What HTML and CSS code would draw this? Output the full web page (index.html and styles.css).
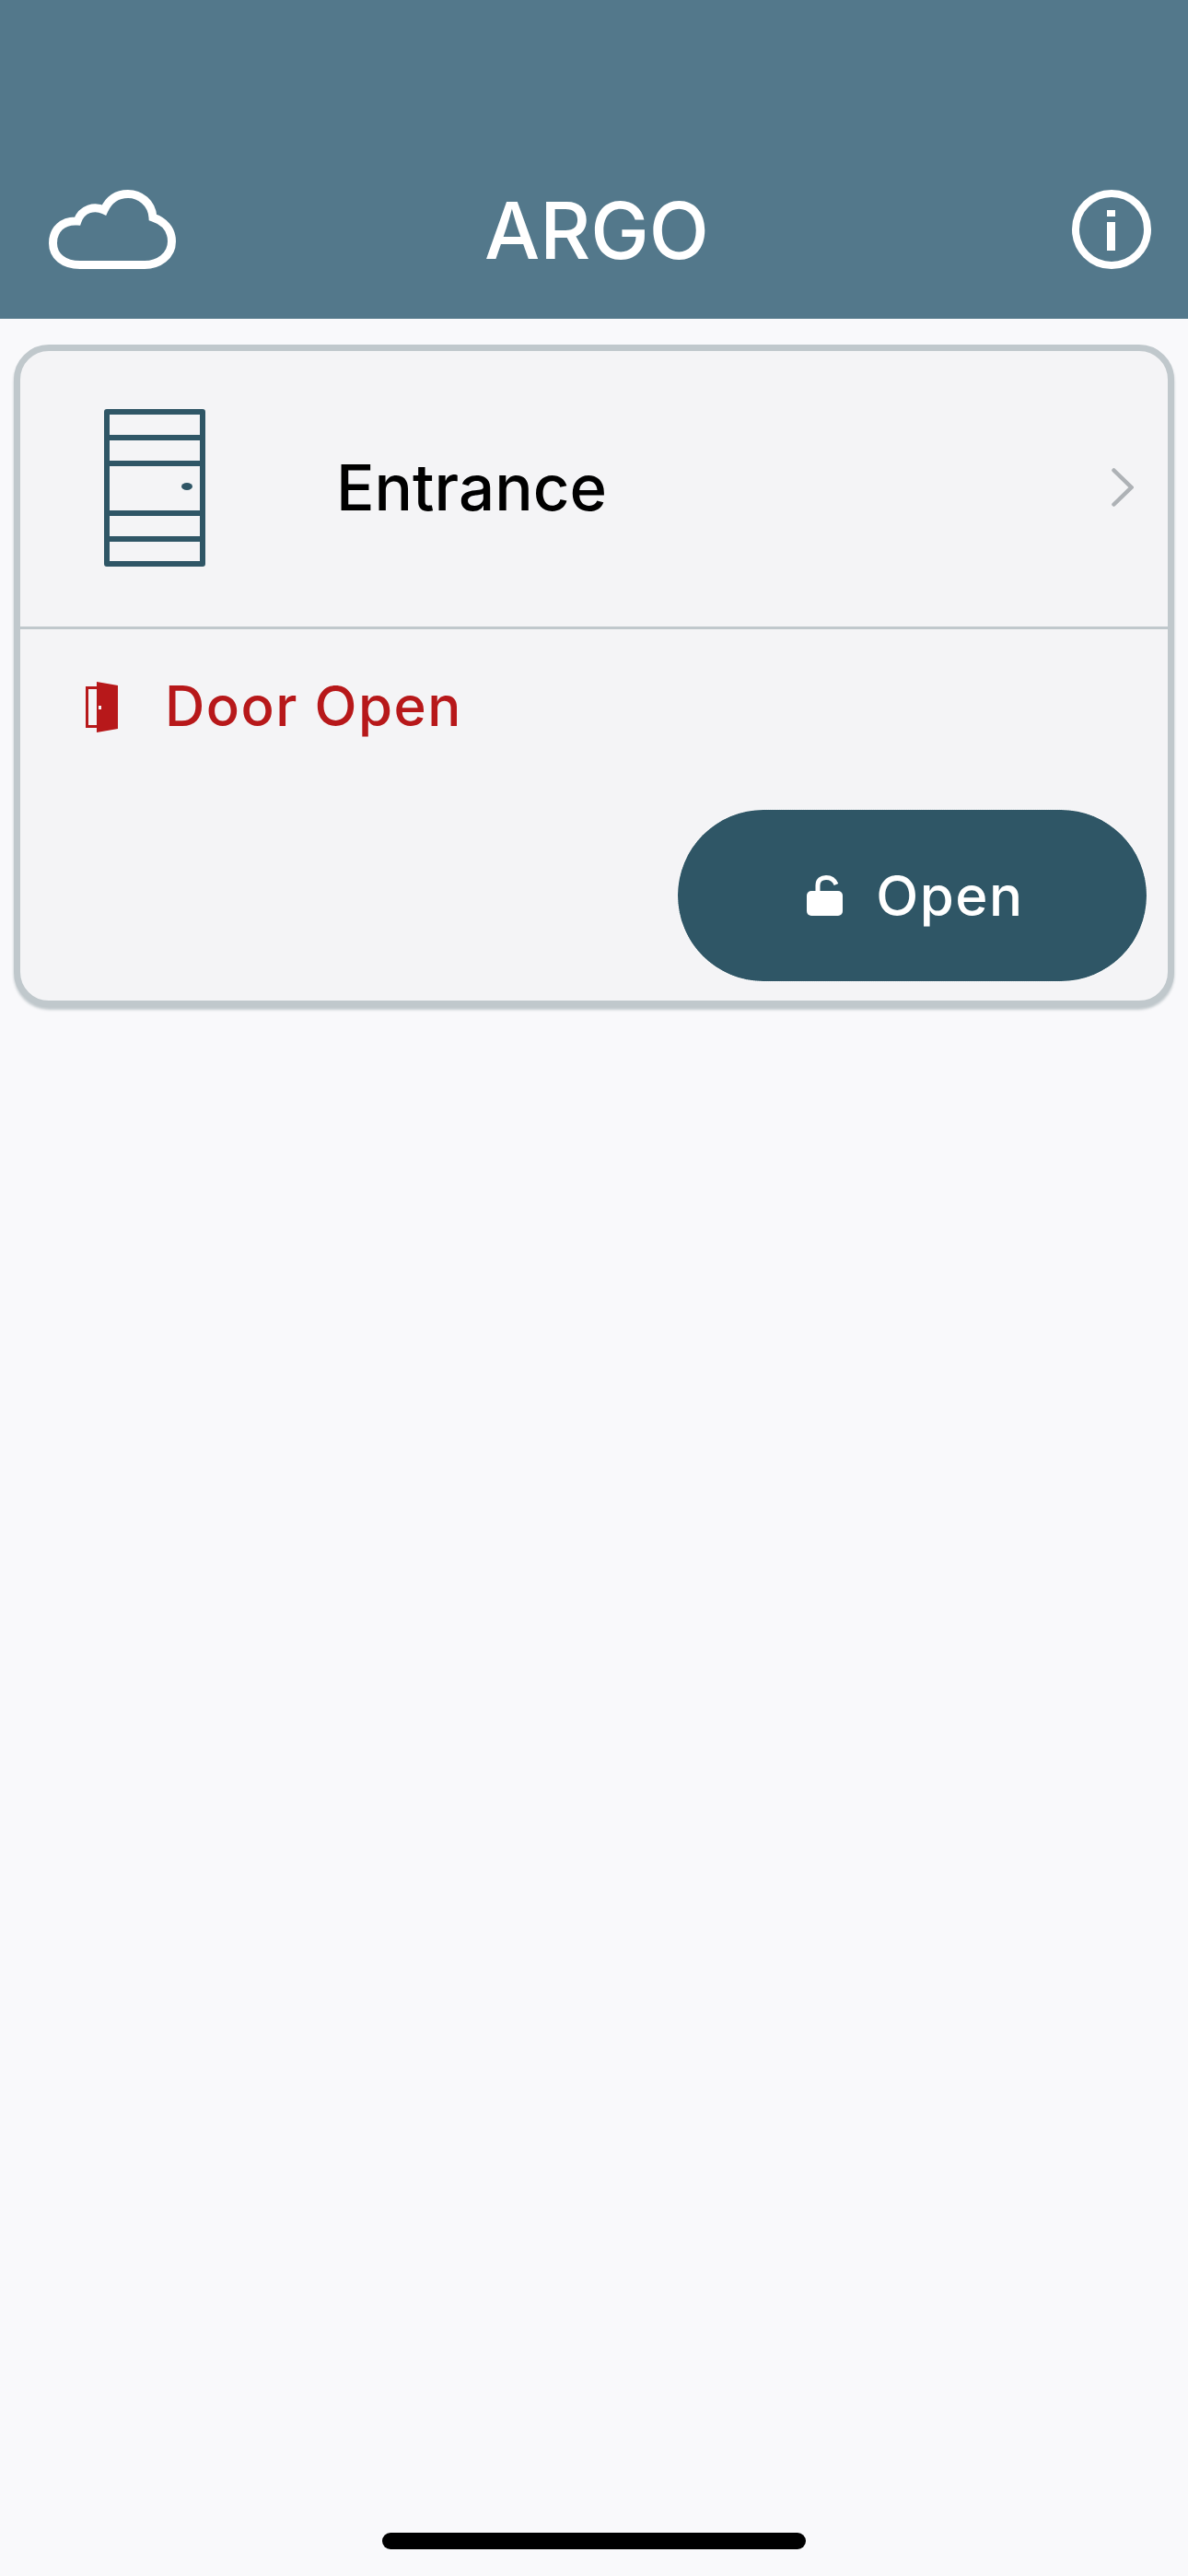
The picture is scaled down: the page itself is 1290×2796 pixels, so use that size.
FILE: index.html
```html
<html>
<head>
    <title>ARGO</title>
    <link rel="stylesheet" href="styles.css">
</head>
<body>
    <header class="top-bar">
        <svg class="top-icon cloud-icon" viewBox="0 0 138 86">
            <path d="M34 81.500H104C119 81.500 133.500 72 133.500 56C133.500 43 125 34 113 30C112 14 99 4.500 86 4.500C74 4.500 65 11 60 22C50 17 36 20 31 34C15 33 4.500 43 4.500 58C4.500 72 16 81.500 34 81.500Z" fill="none" stroke="#fff" stroke-width="9" stroke-linejoin="miter"/>
        </svg>
        <h1 class="title">ARGO</h1>
        <svg class="top-icon info-icon" viewBox="0 0 86 86">
            <circle cx="43" cy="43" r="39" fill="none" stroke="#fff" stroke-width="8"/>
            <rect x="38" y="22" width="9" height="7" fill="#fff"/>
            <rect x="38" y="35" width="9" height="31" fill="#fff"/>
        </svg>
    </header>

    <main class="content">
        <section class="card">
            <div class="card-head">
                <svg class="door-icon" viewBox="0 0 110 171">
                    <rect x="3" y="3" width="104" height="165" fill="none" stroke="#2f5666" stroke-width="6" stroke-linejoin="round"/>
                    <path d="M3 31H107M3 59H107M3 113H107M3 141H107" stroke="#2f5666" stroke-width="6"/>
                    <ellipse cx="90" cy="84" rx="6" ry="4" fill="#2f5666"/>
                </svg>
                <span class="door-name">Entrance</span>
                <svg class="chevron" viewBox="0 0 24 42">
                    <path d="M2.500 2.500L21.500 21L2.500 39.500" fill="none" stroke="#aeb2b6" stroke-width="4.500" stroke-linecap="round"/>
                </svg>
            </div>
            <div class="card-status">
                <svg class="status-icon" viewBox="0 0 36 55">
                    <path d="M1 5H14V8H4V47H14V50H1Z" fill="#b7181a"/>
                    <path d="M13 0L36 4V51L13 55Z" fill="#b7181a"/>
                    <rect x="15" y="26" width="3" height="4" fill="#f4f4f6"/>
                </svg>
                <span class="status-text">Door Open</span>
            </div>
            <div class="card-actions">
                <button class="open-btn">
                    <svg class="lock-icon" viewBox="0 0 39 44">
                        <path d="M12 18V11C12 5 16 2.500 21 2.500C26 2.500 30 5 32 10" fill="none" stroke="#fff" stroke-width="5"/>
                        <rect x="0" y="17" width="39" height="27" rx="5" fill="#fff"/>
                    </svg>
                    <span>Open</span>
                </button>
            </div>
        </section>
    </main>

    <div class="home-bar"></div>
</body>
</html>
```

FILE: styles.css
```css
body {
    margin: 0;
    height: 2796px;
    display: flex;
    flex-direction: column;
    background-color: #f9f9fb;
    font-family: Inter, "Liberation Sans", sans-serif;
}

.top-bar {
    height: 346px;
    box-sizing: border-box;
    padding: 0 40px 54px 53px;
    display: grid;
    grid-template-columns: 1fr auto 1fr;
    align-items: end;
    background-color: #53788b;
}

.top-icon {
    height: 86px;
    display: block;
}

.cloud-icon {
    width: 138px;
}

.info-icon {
    width: 86px;
    justify-self: end;
}

.title {
    margin: 0 7px -3px 0;
    color: white;
    font-size: 85px;
    font-weight: 500;
    line-height: 88px;
}

.content {
    flex: 1;
    padding: 28px 15px 0 15px;
}

.card {
    height: 719px;
    box-sizing: border-box;
    border: 7px solid #c0c8cc;
    border-radius: 38px;
    background-color: #f4f4f6;
    box-shadow: 0 3px 3px #c0c8cc;
}

.card-head {
    height: 302px;
    box-sizing: border-box;
    padding: 0 37px 3px 91px;
    display: flex;
    align-items: center;
    border-bottom: 3px solid #c0c8cc;
}

.door-icon {
    width: 110px;
    height: 171px;
    flex-shrink: 0;
}

.door-name {
    margin-left: 142px;
    font-size: 69px;
    font-weight: 500;
    color: black;
}

.chevron {
    margin-left: auto;
    width: 24px;
    height: 42px;
}

.card-status {
    padding: 0 0 6px 70px;
    height: 171px;
    box-sizing: border-box;
    display: flex;
    align-items: center;
}

.status-icon {
    width: 36px;
    height: 55px;
    margin-top: 3px;
}

.status-text {
    margin-left: 51px;
    font-size: 60px;
    font-weight: 500;
    color: #b7181a;
    letter-spacing: 1.500px;
}

.card-actions {
    margin-top: 25px;
    padding-right: 23px;
    display: flex;
    justify-content: flex-end;
}

.open-btn {
    width: 509px;
    height: 186px;
    padding: 0 0 0 7px;
    display: flex;
    align-items: center;
    justify-content: center;
    gap: 36px;
    border: none;
    border-radius: 93px;
    outline: 1px dotted #fff;
    background-color: #2f5666;
    color: white;
    font-family: Inter, "Liberation Sans", sans-serif;
    font-size: 60px;
    font-weight: 500;
    letter-spacing: 1.500px;
}

.lock-icon {
    width: 39px;
    height: 44px;
}

.home-bar {
    width: 460px;
    height: 18px;
    margin: 0 auto 29px;
    border-radius: 9px;
    background-color: black;
}
```
